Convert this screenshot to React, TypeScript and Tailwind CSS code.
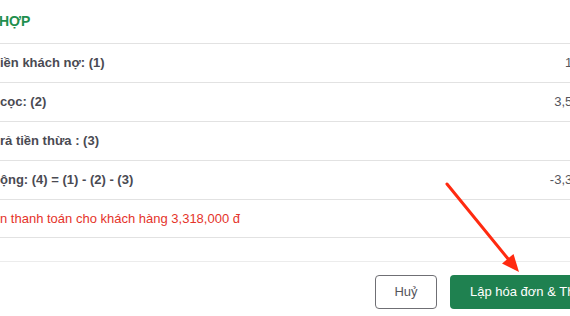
import React from "react";

interface Row {
  label: string;
  value: string;
  tone?: "danger";
}

// Rows of the summary table (the dialog is cropped on both sides)
const rows: Row[] = [
  { label: "iền khách nợ: (1)", value: "182,000" },
  { label: "cọc: (2)", value: "3,500,000" },
  { label: "rả tiền thừa : (3)", value: "" },
  { label: "ộng: (4) = (1) - (2) - (3)", value: "-3,318,000" },
  { label: "n thanh toán cho khách hàng 3,318,000 đ", value: "", tone: "danger" },
];

const ArrowAnnotation = () => (
  <svg
    className="absolute left-0 top-0 pointer-events-none"
    width="570"
    height="316"
    viewBox="0 0 570 316"
  >
    <line x1="447" y1="184" x2="509" y2="260" stroke="#ff2a10" strokeWidth="3" strokeLinecap="round" />
    <polygon points="519,272 502,263.5 513.5,254" fill="#ff2a10" />
  </svg>
);

export default function App() {
  return (
    <div
      className="relative w-[570px] h-[316px] overflow-hidden bg-white"
      style={{ fontFamily: '"Liberation Sans", Arial, sans-serif' }}
    >
      <div className="w-[612px]">
        <div className="h-[44px] flex items-center border-b border-[#e2e2e2]">
          <h2 className="text-[14px] font-bold text-[#1f8f4e] -ml-px">HỢP</h2>
        </div>

        <div>
          {rows.map((row, index) => (
            <div
              key={index}
              className="h-[39px] last:h-[38px] flex items-center justify-between border-b border-[#e2e2e2]"
            >
              <span
                className={
                  row.tone === "danger"
                    ? "text-[13px] text-[#e5342a]"
                    : "text-[13px] font-bold text-[#4a4a52]"
                }
              >
                {row.label}
              </span>
              <span className="text-[13px] text-[#55555c]">{row.value}</span>
            </div>
          ))}
        </div>

        <div className="mt-[23px] border-t border-[#ececec] pt-[13px] flex justify-end gap-[13px]">
          <button className="w-[62px] h-[34px] rounded-[4px] border border-[#6f6f74] text-[13px] text-[#55555c] bg-white">
            Huỷ
          </button>
          <button className="w-[162px] h-[34px] rounded-[4px] bg-[#1f8150] text-[13px] text-white text-left pl-[20px] whitespace-nowrap">
            Lập hóa đơn &amp; Thanh toán
          </button>
        </div>
      </div>

      <ArrowAnnotation />
    </div>
  );
}
